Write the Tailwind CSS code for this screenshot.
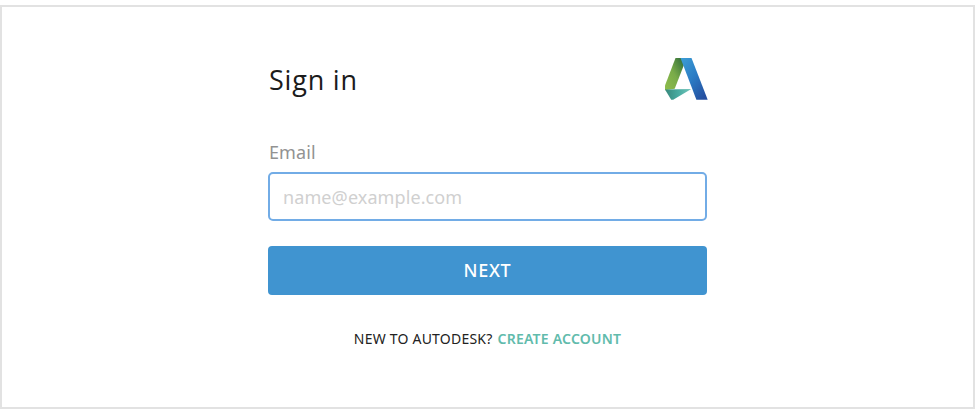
<!DOCTYPE html>
<html lang="en">
<head>
<meta charset="utf-8">
<title>Sign in</title>
<script src="https://cdn.jsdelivr.net/npm/@tailwindcss/browser@4"></script>
</head>
<body class="h-[413px] overflow-hidden bg-white pt-[5px] font-['Noto_Sans','Open_Sans',sans-serif]">
<main class="h-[404px] border-2 border-[#e2e2e2]">
  <form class="mx-auto flex w-[439px] flex-col pt-[50px]">
    <header class="flex h-[44px] items-center justify-between">
      <h1 class="pt-[2px] pl-px font-['Open_Sans',sans-serif] text-[27px] leading-[44px] font-normal tracking-[0.8px] text-[#1b1b1b]">Sign in</h1>
      <svg class="-mr-px h-[44px] w-[44px]" viewBox="0 0 44 44" aria-label="Autodesk">
        <defs>
          <linearGradient id="green" x1="0" y1="1" x2="1" y2="0"><stop stop-color="#8fbd4c"/><stop offset=".5" stop-color="#79ab49"/><stop offset="1" stop-color="#2c6a39"/></linearGradient>
          <linearGradient id="blue" x1="0" y1="0" x2=".8" y2="1"><stop stop-color="#3d9ed5"/><stop offset=".5" stop-color="#2b7dc5"/><stop offset="1" stop-color="#254fa0"/></linearGradient>
          <linearGradient id="teal" x1="0" y1="0" x2="1" y2="0"><stop stop-color="#37887b"/><stop offset=".5" stop-color="#48aaa0"/><stop offset="1" stop-color="#74c7bc"/></linearGradient>
        </defs>
        <path d="M11.5 1H18.5L19.7 8.5L10.7 31.7L1 33.2V28.5Z" fill="url(#green)"/>
        <path d="M1 32.5L27.3 32L9.2 42.8H7.2Z" fill="url(#teal)"/>
        <path d="M16.5 1H27.5L43.7 42.7H32.4Z" fill="url(#blue)"/>
      </svg>
    </header>
    <label for="email" class="mt-[37px] h-7 pl-px text-[18px] leading-7 font-normal tracking-[0.1px] text-[#929292]">Email</label>
    <input id="email" type="email" placeholder="name@example.com" class="mt-[6px] h-[49px] w-full rounded-[5px] border-2 border-[#72ace6] bg-white px-[13px] text-[18px] font-normal tracking-[0.1px] outline-none placeholder:text-[#d0d0d0]">
    <button type="button" class="mt-[25px] h-[49px] rounded-[4px] bg-[#4094d0] text-[18px] font-medium tracking-[0.7px] text-white">NEXT</button>
    <p class="mt-[33px] flex justify-center gap-[5px] text-[14px] leading-[22px] tracking-[0.22px] whitespace-nowrap"><span class="text-[#222]">NEW TO AUTODESK?</span><a href="#" class="font-semibold text-[#61bbac]">CREATE ACCOUNT</a></p>
  </form>
</main>
</body>
</html>
